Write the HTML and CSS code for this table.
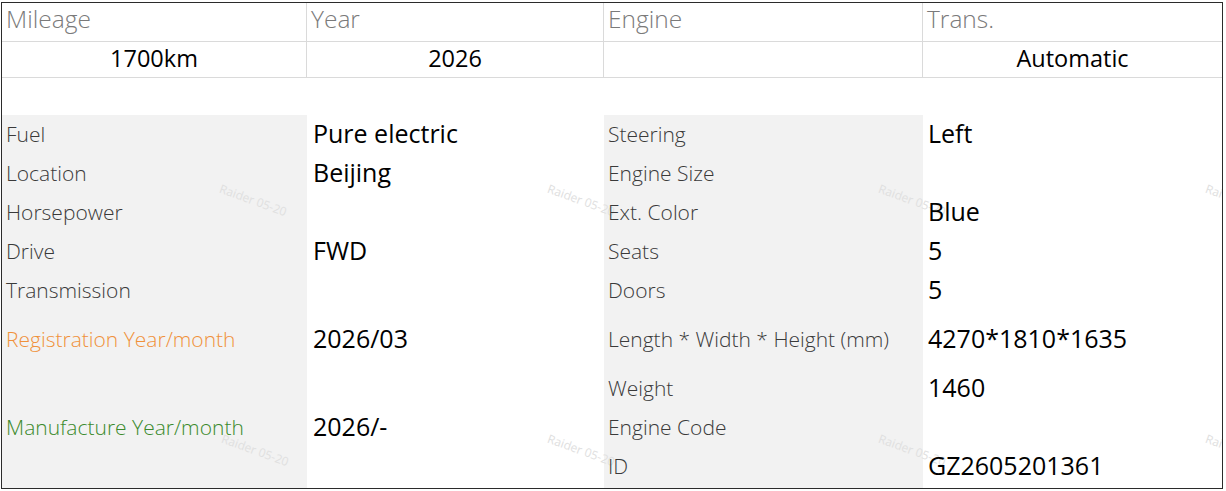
FILE: index.html
```html
<!DOCTYPE html>
<html lang="en">
<head>
    <meta charset="UTF-8">
    <title>Vehicle Details</title>
    <link rel="stylesheet" href="styles.css">
</head>
<body>
    <div class="sheet">
        <div class="summary">
            <div class="head">Mileage</div>
            <div class="head">Year</div>
            <div class="head">Engine</div>
            <div class="head">Trans.</div>
            <div class="cell">1700km</div>
            <div class="cell">2026</div>
            <div class="cell"></div>
            <div class="cell">Automatic</div>
        </div>

        <div class="specs">
            <!-- left block -->
            <div class="label r1">Fuel</div>
            <div class="value r1">Pure electric</div>
            <div class="label r2">Location</div>
            <div class="value r2">Beijing</div>
            <div class="label r3">Horsepower</div>
            <div class="value r3"></div>
            <div class="label r4">Drive</div>
            <div class="value r4">FWD</div>
            <div class="label r5">Transmission</div>
            <div class="value r5"></div>
            <div class="label r6 orange">Registration Year/month</div>
            <div class="value r6">2026/03</div>
            <div class="label r7-9 green">Manufacture Year/month</div>
            <div class="value r7-9">2026/-</div>

            <!-- right block -->
            <div class="label right r1">Steering</div>
            <div class="value right r1">Left</div>
            <div class="label right r2">Engine Size</div>
            <div class="value right r2"></div>
            <div class="label right r3">Ext. Color</div>
            <div class="value right r3">Blue</div>
            <div class="label right r4">Seats</div>
            <div class="value right r4">5</div>
            <div class="label right r5">Doors</div>
            <div class="value right r5">5</div>
            <div class="label right r6">Length * Width * Height (mm)</div>
            <div class="value right r6">4270*1810*1635</div>
            <div class="label right r7">Weight</div>
            <div class="value right r7">1460</div>
            <div class="label right r8">Engine Code</div>
            <div class="value right r8"></div>
            <div class="label right r9">ID</div>
            <div class="value right r9">GZ2605201361</div>
        </div>

        <!-- watermark -->
        <span class="mark" style="left:221px;top:177px">Raider 05-20</span>
        <span class="mark" style="left:549px;top:177px">Raider 05-20</span>
        <span class="mark" style="left:880px;top:177px">Raider 05-20</span>
        <span class="mark" style="left:1207px;top:177px">Raider 05-20</span>
        <span class="mark" style="left:223px;top:427px">Raider 05-20</span>
        <span class="mark" style="left:549px;top:427px">Raider 05-20</span>
        <span class="mark" style="left:880px;top:427px">Raider 05-20</span>
        <span class="mark" style="left:1207px;top:427px">Raider 05-20</span>
    </div>
</body>
</html>
```

FILE: styles.css
```css
* {
    box-sizing: border-box;
    font-family: 'Open Sans', 'Noto Sans', sans-serif;
}

body {
    margin: 0;
    background-color: white;
    color: #000;
}

.sheet {
    position: relative;
    overflow: hidden;
    margin: 2px 0 0 1px;
    width: 1222px;
    height: 487px;
    border: 1px solid #2b2b2b;
}

.summary {
    display: grid;
    grid-template-columns: 305px 297px 319px 299px;
    grid-template-rows: 39px 36px;
    margin-bottom: 37px;
}

.head,
.cell {
    border-right: 1px solid #dadada;
    border-bottom: 1px solid #dadada;
}

.head:nth-child(4),
.cell:nth-child(8) {
    border-right: none;
}

.head {
    padding: 0 4px;
    font-size: 24.5px;
    font-weight: 300;
    color: #7a7a7a;
    line-height: 32px;
}

.cell {
    text-align: center;
    font-size: 23.5px;
    line-height: 33px;
}

/* grey label columns are painted on the grid so the watermark shows on them */
.specs {
    display: grid;
    grid-template-columns: 305px 297px 319px 299px;
    grid-template-rows: 39px 39px 39px 39px 39px 59px 39px 39px 39px;
    height: 373px;
    background: linear-gradient(to right,
        #f2f2f2 0, #f2f2f2 305px,
        transparent 305px, transparent 602px,
        #f2f2f2 602px, #f2f2f2 921px,
        transparent 921px);
}

.label {
    grid-column: 1;
    position: relative;
    z-index: 1;
    display: flex;
    align-items: center;
    padding: 0 4px 2px;
    font-size: 21px;
    font-weight: 300;
    color: #3a3a3a;
}

.value {
    grid-column: 2;
    position: relative;
    z-index: 1;
    display: flex;
    align-items: center;
    padding: 0 6px 3px;
    font-size: 25px;
}

.label.right {
    grid-column: 3;
}

.value.right {
    grid-column: 4;
    padding: 0 5px 3px;
}

.r1 { grid-row: 1; }
.r2 { grid-row: 2; }
.r3 { grid-row: 3; }
.r4 { grid-row: 4; }
.r5 { grid-row: 5; }
.r6 { grid-row: 6; }
.r7 { grid-row: 7; }
.r8 { grid-row: 8; }
.r9 { grid-row: 9; }
.r7-9 { grid-row: 7 / 10; }

.orange {
    color: #f0913a;
}

.green {
    color: #3b8a2c;
}

.mark {
    position: absolute;
    font-size: 12px;
    color: #e0e0e0;
    transform: rotate(20deg);
    transform-origin: left top;
    white-space: nowrap;
    pointer-events: none;
}
```
